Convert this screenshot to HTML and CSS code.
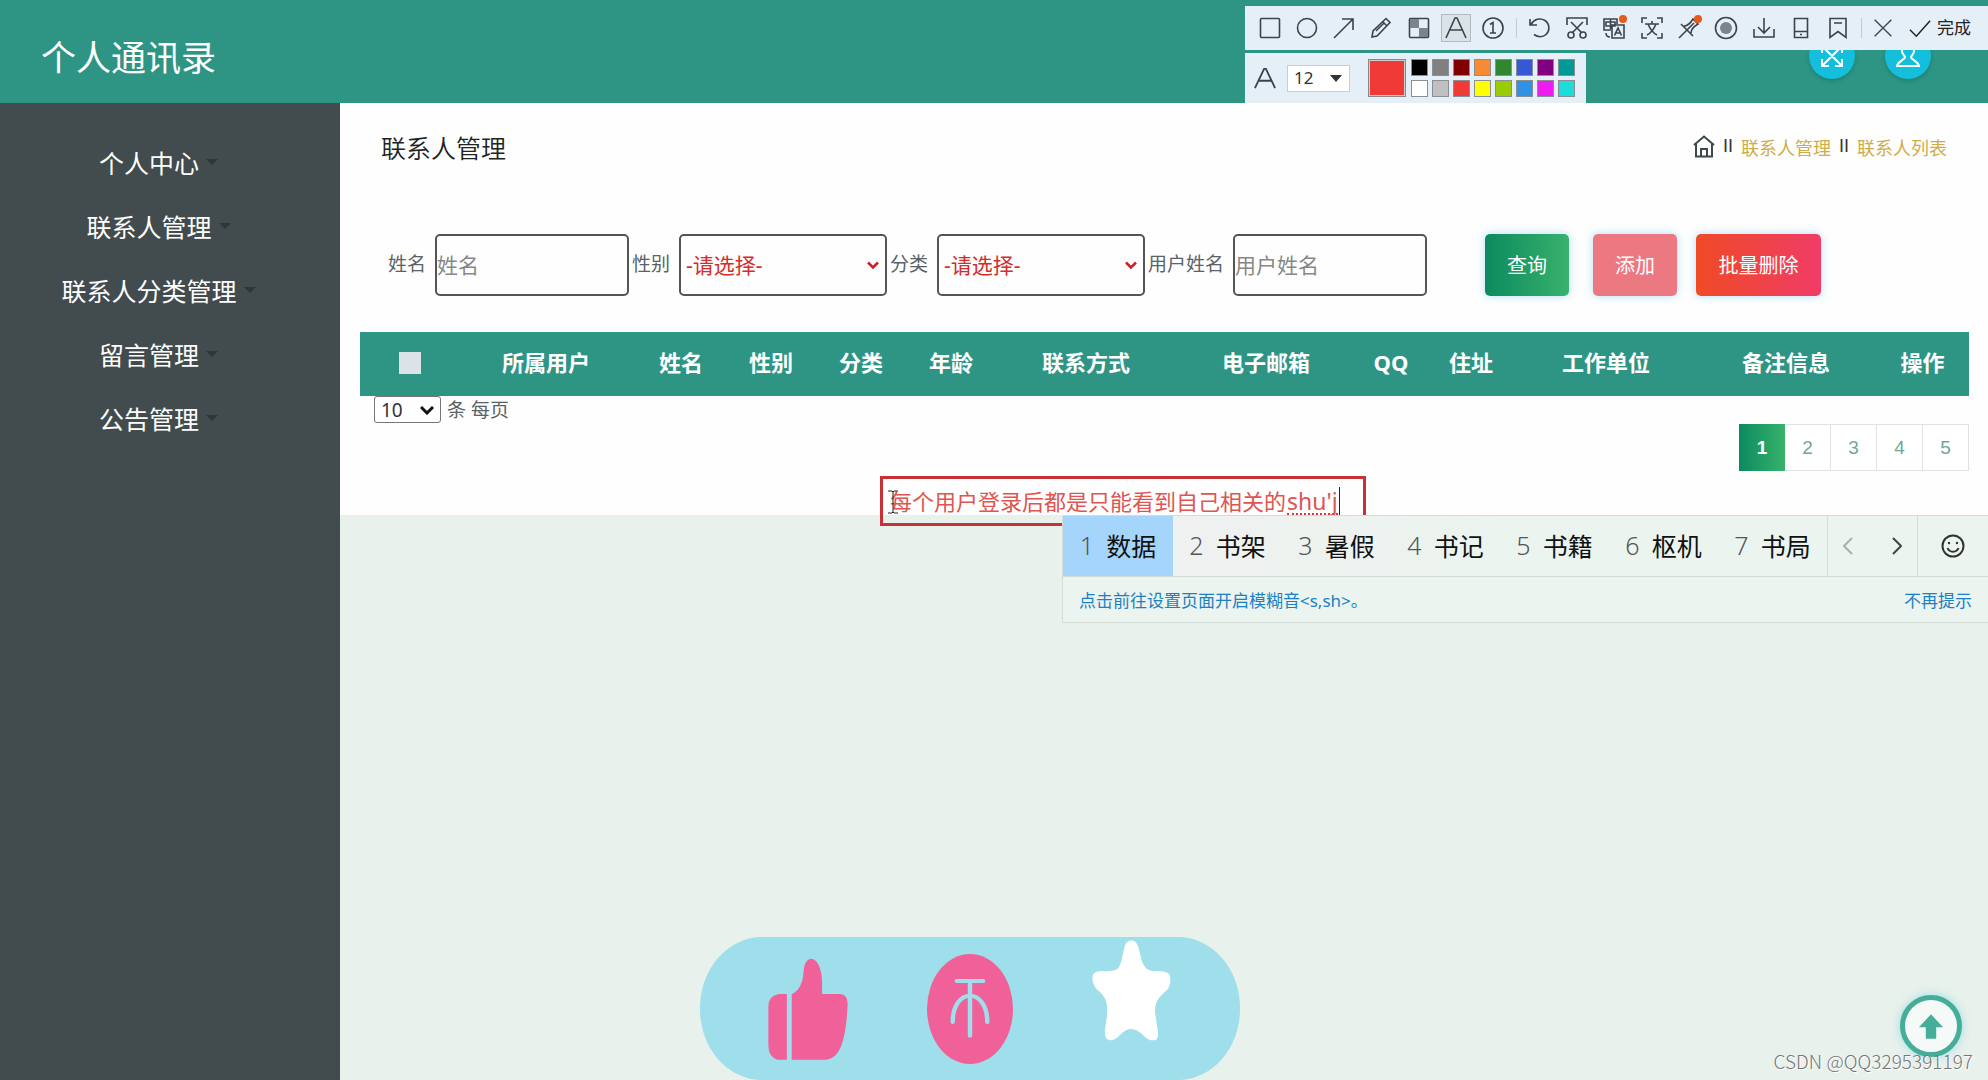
FILE: index.html
```html
<!DOCTYPE html>
<html lang="zh-CN">
<head>
<meta charset="utf-8">
<title>个人通讯录</title>
<link rel="stylesheet" href="styles.css">
</head>
<body>
<div class="page">
  <header class="header">
    <h1 class="brand">个人通讯录</h1>
    <div class="header-actions">
      <button class="round-btn" type="button" aria-label="全屏">
        <svg width="24" height="24" viewBox="0 0 24 24"><path d="M3 3l18 18M21 3L3 21M2 9V2h7M15 2h7v7M22 15v7h-7M9 22H2v-7"/></svg>
      </button>
      <button class="round-btn" type="button" aria-label="用户">
        <svg width="24" height="24" viewBox="0 0 24 24"><path d="M12 1c-4 0-6 3-6 6 0 3 2 4 3 6 0 3-7 4-8 9h22c-1-5-8-6-8-9 1-2 3-3 3-6 0-3-2-6-6-6z"/></svg>
      </button>
    </div>
  </header>

  <div class="layout">
    <nav class="sidebar">
      <a class="menu-item" href="#">个人中心<span class="caret"></span></a>
      <a class="menu-item" href="#">联系人管理<span class="caret"></span></a>
      <a class="menu-item" href="#">联系人分类管理<span class="caret"></span></a>
      <a class="menu-item" href="#">留言管理<span class="caret"></span></a>
      <a class="menu-item" href="#">公告管理<span class="caret"></span></a>
    </nav>

    <main class="main">
      <section class="panel">
        <div class="title-row">
          <h2 class="page-title">联系人管理</h2>
          <div class="breadcrumb">
            <a class="home" href="#" aria-label="首页"><svg width="22" height="23" viewBox="0 0 22 23"><path d="M1 10L11 1.500l10 8.500M3 9v12.500h16V9M8 21.500V14h6v7.500"/></svg></a>
            <span class="divider">II</span>
            <a href="#">联系人管理</a>
            <span class="divider">II</span>
            <a href="#">联系人列表</a>
          </div>
        </div>

        <form class="search">
          <label for="name">姓名</label>
          <input id="name" class="field" type="text" placeholder="姓名">
          <label for="sex">性别</label>
          <select id="sex" class="field select"><option>-请选择-</option></select>
          <label for="kind">分类</label>
          <select id="kind" class="field select"><option>-请选择-</option></select>
          <label for="user">用户姓名</label>
          <input id="user" class="field" type="text" placeholder="用户姓名">
          <div class="buttons">
            <button class="btn btn-query" type="button">查询</button>
            <button class="btn btn-add" type="button">添加</button>
            <button class="btn btn-delete" type="button">批量删除</button>
          </div>
        </form>

        <table class="contacts">
          <colgroup>
            <col class="c-check"><col class="c-wide"><col class="c-short"><col class="c-short"><col class="c-short"><col class="c-short"><col class="c-wide"><col class="c-wide"><col class="c-qq"><col class="c-short"><col class="c-wide"><col class="c-wide"><col class="c-last">
          </colgroup>
          <thead>
            <tr>
              <th><input class="check" type="checkbox" aria-label="全选"></th>
              <th>所属用户</th><th>姓名</th><th>性别</th><th>分类</th><th>年龄</th><th>联系方式</th><th>电子邮箱</th><th>QQ</th><th>住址</th><th>工作单位</th><th>备注信息</th><th>操作</th>
            </tr>
          </thead>
        </table>

        <div class="table-foot">
          <label class="per-page"><select class="size-select"><option>10</option></select>条 每页</label>
          <div class="pager">
            <button class="page-no current" type="button">1</button>
            <button class="page-no" type="button">2</button>
            <button class="page-no" type="button">3</button>
            <button class="page-no" type="button">4</button>
            <button class="page-no" type="button">5</button>
          </div>
        </div>
      </section>
    </main>
  </div>

  <div class="shot-tools">
    <div class="tool-row">
      <div class="tools tools-draw">
        <button type="button" aria-label="矩形"><svg viewBox="0 0 24 24"><rect x="2.500" y="2.500" width="19" height="19" rx="1"/></svg></button>
        <button type="button" aria-label="椭圆"><svg viewBox="0 0 24 24"><circle cx="12" cy="12" r="9.500"/></svg></button>
        <button type="button" aria-label="箭头"><svg viewBox="0 0 24 24"><path d="M2 22L21 3M10 3h11v11"/></svg></button>
        <button type="button" aria-label="画笔"><svg viewBox="0 0 24 24"><path d="M3 21l1-6L17 2.500l4 4L8 20zM14 6l4 4M7 15l8-8"/></svg></button>
        <button type="button" aria-label="马赛克"><svg viewBox="0 0 24 24"><rect x="2.500" y="2.500" width="19" height="19" rx="1"/><path class="gray" d="M3 3h9v9H3zM12 12h9v9h-9z"/></svg></button>
        <button type="button" aria-label="文字"><svg class="active" viewBox="0 0 30 28"><path d="M5 24L14 4h2l9 20M9 16h12"/></svg></button>
        <button type="button" aria-label="序号"><svg viewBox="0 0 24 24"><circle cx="12" cy="12" r="10"/><path d="M9 8.500L12 6.500V17M9 17h6"/></svg></button>
      </div>
      <span class="sep"></span>
      <div class="tools tools-edit">
        <button type="button" aria-label="撤销"><svg viewBox="0 0 24 24"><path d="M2 3v6h7M3 8.500C6 3 12 1.500 17 4.500c5 3.500 5 10.500 1 14-3 3-8 3-12 0"/></svg></button>
        <button type="button" aria-label="裁剪"><svg viewBox="0 0 24 24"><path d="M2 9V2h20v7M6 6l11 11M18 6L7 17"/><circle cx="6" cy="19" r="3"/><circle cx="18" cy="19" r="3"/></svg></button>
        <button type="button" aria-label="翻译"><svg viewBox="0 0 24 24"><path d="M15 8V3H2v11h7M4 6h9v4H4zM8.500 3v10M10 9h12v13H10zM12.500 19.500L16 12l3.500 7.500M14 17h4M4 17c0 3 1 4 4 4"/><circle class="dot" cx="21" cy="3" r="4"/></svg></button>
        <button type="button" aria-label="识别"><svg viewBox="0 0 24 24"><path d="M2 7V2h5M17 2h5v5M22 17v5h-5M7 22H2v-5M5 8h14M12 5v3M7 19c4-2 7-6 9-11M8 8c2 5 5 9 9 11"/></svg></button>
        <button type="button" aria-label="钉住"><svg viewBox="0 0 24 24"><path d="M2 22l8-8M4 8l12 12M7 10c3 0 6-2 9-7l5 5c-5 3-7 6-7 9M10 14l7-7"/><circle class="dot" cx="21" cy="3" r="4"/></svg></button>
        <button type="button" aria-label="录制"><svg viewBox="0 0 24 24"><circle cx="12" cy="12" r="10.500"/><circle class="gray" cx="12" cy="12" r="6"/></svg></button>
        <button type="button" aria-label="保存"><svg viewBox="0 0 24 24"><path d="M12 2v15M6 11l6 6 6-6M2 13v8h20v-8"/></svg></button>
        <button type="button" aria-label="手机"><svg viewBox="0 0 24 24"><path d="M5.500 2.500h13v19h-13zM5.500 15.500h13M11 18.500h2"/></svg></button>
        <button type="button" aria-label="收藏"><svg viewBox="0 0 24 24"><path d="M4 2.500h16v19l-8-6-8 6zM8 7h8"/></svg></button>
      </div>
      <span class="sep"></span>
      <button class="tool-close" type="button" aria-label="关闭"><svg viewBox="0 0 24 24"><path d="M2 2l20 20M22 2L2 22"/></svg></button>
      <button class="tool-done" type="button"><svg viewBox="0 0 24 24"><path d="M1 14l7 7L23 4"/></svg>完成</button>
    </div>
    <div class="style-row">
      <svg class="style-a" viewBox="0 0 24 24"><path d="M1 23L11 2h2l10 21M5 15h14"/></svg>
      <select class="font-size" aria-label="字号"><option>12</option></select>
      <span class="swatch-now"></span>
      <div class="swatches">
        <button class="sw black" type="button" aria-label="黑"></button><button class="sw gray-d" type="button" aria-label="灰"></button><button class="sw maroon" type="button" aria-label="深红"></button><button class="sw orange" type="button" aria-label="橙"></button><button class="sw green" type="button" aria-label="绿"></button><button class="sw blue" type="button" aria-label="蓝"></button><button class="sw purple" type="button" aria-label="紫"></button><button class="sw teal" type="button" aria-label="青"></button>
        <button class="sw white" type="button" aria-label="白"></button><button class="sw silver" type="button" aria-label="银"></button><button class="sw red" type="button" aria-label="红"></button><button class="sw yellow" type="button" aria-label="黄"></button><button class="sw lime" type="button" aria-label="黄绿"></button><button class="sw sky" type="button" aria-label="天蓝"></button><button class="sw magenta" type="button" aria-label="品红"></button><button class="sw cyan" type="button" aria-label="蓝绿"></button>
      </div>
    </div>
  </div>

  <div class="note">
    <svg class="ibeam" width="10" height="24" viewBox="0 0 10 24"><path d="M0 1h4l1 1 1-1h4M5 2v20M0 23h4l1-1 1 1h4"/></svg>
    <span>每个用户登录后都是只能看到自己相关的</span><span class="composing">shu'j</span><span class="cursor"></span>
  </div>

  <div class="ime">
    <div class="ime-row">
      <button class="cand selected" type="button"><span class="num">1</span>数据</button>
      <button class="cand" type="button"><span class="num">2</span>书架</button>
      <button class="cand" type="button"><span class="num">3</span>暑假</button>
      <button class="cand" type="button"><span class="num">4</span>书记</button>
      <button class="cand" type="button"><span class="num">5</span>书籍</button>
      <button class="cand" type="button"><span class="num">6</span>枢机</button>
      <button class="cand" type="button"><span class="num">7</span>书局</button>
      <div class="ime-nav">
        <button class="prev" type="button" aria-label="上一页"><svg width="10" height="18" viewBox="0 0 10 18"><path d="M9 1L1 9l8 8"/></svg></button>
        <button type="button" aria-label="下一页"><svg width="10" height="18" viewBox="0 0 10 18"><path d="M1 1l8 8-8 8"/></svg></button>
      </div>
      <button class="ime-face" type="button" aria-label="表情"><svg width="24" height="24" viewBox="0 0 24 24"><circle cx="12" cy="12" r="10.500"/><path d="M6.500 14c2 5 9 5 11 0"/><circle class="eye" cx="8" cy="9" r="1.200"/><circle class="eye" cx="16" cy="9" r="1.200"/></svg></button>
    </div>
    <div class="ime-tip">
      <a href="#">点击前往设置页面开启模糊音&lt;s,sh&gt;。</a>
      <a href="#">不再提示</a>
    </div>
  </div>

  <div class="triple">
    <button type="button" aria-label="点赞"><svg width="80" height="102" viewBox="237 111 216 306" preserveAspectRatio="none">
      <path class="pink" d="M288 219h-22q-28 5-28 38v116q0 36 25 43h25zM301 416V219q29-14 32-66 2-37 19-40c20 0 31 34 31 71v35h49q20 2 20 28-2 72-14 117-13 48-43 52z"/></svg></button>
    <button type="button" aria-label="投币"><svg width="86" height="110" viewBox="667 101 234 330" preserveAspectRatio="none">
      <ellipse class="pink" cx="784" cy="266" rx="117" ry="165"/><path class="coin" d="M748 182h72M784 186v160M737 305c0-105 94-105 94 0"/></svg></button>
    <button class="fav" type="button" aria-label="收藏"><svg width="79" height="101" viewBox="1116 59 214 303" preserveAspectRatio="none">
      <path class="star" d="M1222 60q13 0 19 18l9 40q6 22 18 30 7 4 20 4 42-3 40 22 2 30-16 42c-22 22-26 38-25 62l7 50q4 32-11 32-14 1-27-14-33-38-62-4-16 19-29 18-16-2-14-30l6-48c2-28-3-50-19-66q-21-18-21-42-1-22 24-22 36 2 43-6 8-8 12-26l8-40q4-18 18-20z"/></svg></button>
  </div>

  <button class="to-top" type="button" aria-label="返回顶部"><svg width="26" height="27" viewBox="0 0 30 30"><path d="M15 1L29 16h-8v13H9V16H1z"/></svg></button>
  <div class="watermark">CSDN @QQ3295391197</div>
</div>
</body>
</html>
```

FILE: styles.css
```css
* { box-sizing: border-box; }

body {
  margin: 0;
  background: #e8f1ec;
  font-family: "Noto Sans", "Noto Sans CJK SC", sans-serif;
  color: #333;
}

button, input, select { font-family: inherit; }
button { margin: 0; padding: 0; border: 0; background: none; color: inherit; cursor: pointer; }
a { color: inherit; text-decoration: none; }
svg { display: block; fill: none; stroke: currentColor; }

.page {
  position: relative;
  min-height: 100vh;
  display: flex;
  flex-direction: column;
  overflow: hidden;
}

/* Header */
.header {
  display: flex;
  align-items: center;
  justify-content: space-between;
  height: 103px;
  padding: 8px 57px 0 41px;
  background: #2e9585;
}
.brand { margin: 0; padding-top: 4px; font-size: 35px; font-weight: 400; line-height: 50px; color: #fff; }
.header-actions { display: flex; gap: 30px; }
.round-btn {
  display: grid;
  place-items: center;
  width: 46px;
  height: 46px;
  border-radius: 50%;
  background: #14bfdc;
  color: #fff;
  box-shadow: 0 2px 4px rgba(0, 60, 60, .25);
}
.round-btn svg { stroke-width: 2; }

/* Sidebar */
.layout { flex: 1; display: flex; }
.sidebar {
  flex: 0 0 340px;
  padding: 27px 23px 0 0;
  background: #424b4d;
}
.menu-item {
  display: flex;
  align-items: center;
  justify-content: center;
  gap: 7px;
  height: 64px;
  font-size: 25px;
  color: #fff;
}
.caret { border: 6px solid transparent; border-top-color: #2d3638; border-bottom: 0; }

/* Content panel */
.main { flex: 1; min-width: 0; }
.panel { padding: 30px 19px 44px 20px; background: #fdfefd; }
.title-row {
  display: flex;
  align-items: center;
  justify-content: space-between;
  height: 30px;
  padding: 0 22px 0 21px;
}
.page-title { margin: 0; font-size: 25px; font-weight: 350; line-height: 30px; color: #222; }
.breadcrumb { display: flex; align-items: center; gap: 8px; padding-bottom: 3px; font-size: 18px; color: #333; }
.breadcrumb a { color: #cfac4a; }
.breadcrumb .home { color: #3f484b; }
.breadcrumb svg { stroke-width: 2; }
.divider { font-family: "Liberation Sans", sans-serif; }

.search {
  display: flex;
  align-items: center;
  margin-top: 71px;
  padding-left: 28px;
  font-size: 19px;
  color: #5a6267;
}
.search label { margin: 0 9px 4px 3px; white-space: nowrap; }
.search label:first-child { margin-left: 0; }
.field {
  width: 194px;
  height: 62px;
  padding: 0;
  border: 2px solid #555;
  border-radius: 5px;
  background-color: transparent;
  font-size: 21px;
}
.field::placeholder { color: #888; }
.select {
  width: 208px;
  padding: 0 5px;
  appearance: none;
  color: #d52b2b;
  background: url("data:image/svg+xml,%3Csvg xmlns='http://www.w3.org/2000/svg' width='12' height='9'%3E%3Cpath d='M1 1.500l5 5 5-5' fill='none' stroke='%23d01f1f' stroke-width='2.500'/%3E%3C/svg%3E") no-repeat right 6px center;
}
.buttons { display: flex; margin-left: 58px; }
.btn {
  width: 84px;
  height: 62px;
  padding-bottom: 2px;
  border-radius: 5px;
  font-size: 20px;
  color: #fff;
  box-shadow: 0 0 9px rgba(70, 170, 240, .4);
}
.btn-query { background: linear-gradient(90deg, #0b8a5f, #39b26c); }
.btn-add { margin-left: 24px; background: #ec7882; }
.btn-delete { width: 125px; margin-left: 19px; background: linear-gradient(90deg, #f04a26, #f03c68); }

/* Table */
.contacts {
  width: 100%;
  margin-top: 36px;
  table-layout: fixed;
  border-collapse: collapse;
  background: #2e9585;
  color: #fff;
}
.contacts th { height: 64px; padding: 0 0 4px; font-size: 22px; font-weight: 700; line-height: 30px; }
.c-check { width: 96px; }
.c-wide { width: 180px; }
.c-short { width: 90px; }
.c-qq { width: 70px; }
.c-last { width: 93px; }
.check {
  display: block;
  width: 22px;
  height: 22px;
  margin: 2px 0 0 39px;
  appearance: none;
  background: #dbe2e8;
}

.table-foot { display: flex; justify-content: space-between; align-items: flex-start; padding-left: 14px; }
.per-page { display: flex; align-items: center; gap: 6px; font-size: 19px; line-height: 26px; color: #5a6267; }
.size-select {
  width: 67px;
  height: 27px;
  padding: 0 6px;
  border: 1px solid #767676;
  border-radius: 3px;
  appearance: none;
  font-size: 19px;
  line-height: 24px;
  color: #333;
  background: #fff url("data:image/svg+xml,%3Csvg xmlns='http://www.w3.org/2000/svg' width='14' height='10'%3E%3Cpath d='M1 2l6 6 6-6' fill='none' stroke='%23111' stroke-width='3'/%3E%3C/svg%3E") no-repeat right 6px center;
}
.pager { display: flex; margin-top: 28px; }
.page-no {
  width: 46px;
  height: 47px;
  border: 1px solid #dfe4e3;
  border-left: 0;
  background: #fff;
  font-family: "Liberation Sans", sans-serif;
  font-size: 19px;
  color: #6fa892;
}
.page-no.current { border: 0; background: linear-gradient(90deg, #0b8a5f, #39b26c); color: #fff; font-weight: 700; }

/* Screenshot toolbar */
.shot-tools { position: absolute; top: 6px; right: 0; width: 743px; color: #3d434b; }
.tool-row { display: flex; align-items: center; height: 44px; padding-left: 6px; background: #e5eff8; }
.tools { display: flex; }
.tools button { flex: 1; display: grid; place-items: center; }
.tools-draw { width: 261px; }
.tools-edit { width: 336px; }
.tool-row svg { width: 24px; height: 24px; stroke-width: 1.6; overflow: visible; }
.tool-row svg.active { width: 30px; height: 28px; background: #dae3e8; outline: 1px solid #b4bcc1; outline-offset: -1px; }
.tool-row .gray { fill: #7c838c; stroke: none; }
.tool-row .dot { fill: #e8591c; stroke: none; }
.sep { width: 1px; height: 20px; margin: 0 4px; background: #c2cbd2; }
.tool-close { width: 34px; display: grid; place-items: center; }
.tool-row .tool-close svg { width: 20px; height: 20px; }
.tool-done { display: flex; align-items: center; gap: 6px; margin-left: 9px; font-size: 17px; line-height: 24px; color: #222; }
.tool-row .tool-done svg { width: 22px; height: 22px; }

.style-row {
  display: flex;
  align-items: center;
  width: 341px;
  height: 50px;
  margin-top: 3px;
  padding-left: 9px;
  background: #e5eff8;
}
.style-a { width: 22px; height: 22px; stroke-width: 2; }
.font-size {
  width: 63px;
  height: 27px;
  margin: 0 18px 0 11px;
  padding: 0 6px;
  border: 1px solid #c8ced2;
  appearance: none;
  font-size: 17px;
  line-height: 22px;
  color: #333;
  background: #fff url("data:image/svg+xml,%3Csvg xmlns='http://www.w3.org/2000/svg' width='12' height='7'%3E%3Cpath d='M0 0h12L6 7z' fill='%23333'/%3E%3C/svg%3E") no-repeat right 7px center;
}
.swatch-now { width: 38px; height: 38px; border: 1px solid #888; background: #ef3a38; box-shadow: inset 0 0 0 1px #ccc; }
.swatches { display: grid; grid-template-columns: repeat(8, 17px); gap: 4px; margin-left: 5px; }
.sw { height: 17px; border: 1px solid #8b8f92; }
.black { background: #000; } .gray-d { background: #808080; } .maroon { background: #800000; } .orange { background: #f78a34; }
.green { background: #30872f; } .blue { background: #3757d6; } .purple { background: #800080; } .teal { background: #009a96; }
.white { background: #fff; } .silver { background: #c0c0c0; } .red { background: #ef3a38; } .yellow { background: #ff0; }
.lime { background: #99cc05; } .sky { background: #3192e5; } .magenta { background: #ee1cee; } .cyan { background: #1cdcdc; }

/* Annotation on the canvas */
.note {
  position: absolute;
  left: 880px;
  top: 476px;
  display: flex;
  align-items: center;
  width: 486px;
  height: 50px;
  padding-left: 7px;
  border: 3px solid #c63337;
  font-size: 22px;
  line-height: 30px;
  white-space: nowrap;
  color: #df5552;
}
.ibeam { position: absolute; left: 5px; top: 11px; color: #222; }
.composing { height: 28px; margin-left: 1px; border-bottom: 2px dotted #d93a3a; font-size: 23px; line-height: 28px; }
.cursor { width: 1px; height: 29px; margin-left: 1px; background: #222; }

/* Input method window */
.ime {
  position: absolute;
  left: 1062px;
  right: 0;
  top: 515px;
  border: 1px solid #d3dcd7;
  border-right: 0;
  background: #ebf4ef;
}
.ime-row { display: flex; height: 61px; background: linear-gradient(90deg, #f0f0ef, #ebf4ef 50%); border-bottom: 1px solid #d3dcd7; }
.cand { flex: 0 1 109px; display: flex; align-items: center; justify-content: center; gap: 12px; padding-bottom: 2px; font-size: 25px; color: #111; }
.cand .num { font-weight: 300; color: #555; }
.cand.selected { flex-basis: 110px; background: #a6d5fb; }
.ime-nav { display: flex; justify-content: space-between; align-items: center; width: 91px; padding: 0 15px; border: solid #d3dcd7; border-width: 0 1px; color: #444; }
.ime-nav .prev { color: #aab2ae; }
.ime-nav svg { stroke-width: 2; }
.ime-face { flex: 1; display: grid; place-items: center; color: #333; }
.ime-face svg { stroke-width: 2; }
.ime-face .eye { fill: currentColor; stroke: none; }
.ime-tip { display: flex; align-items: center; justify-content: space-between; height: 45px; padding: 0 16px; font-size: 17px; color: #1c81c4; }

/* Like, coin and favourite bar */
.triple {
  position: absolute;
  left: 700px;
  bottom: 0;
  display: flex;
  align-items: center;
  gap: 79px;
  width: 540px;
  height: 143px;
  padding-left: 68px;
  border-radius: 62px / 71px;
  background: #9fdeeb;
}
.triple svg { stroke: none; }
.triple .pink { fill: #f0619a; }
.triple .star { fill: #fff; }
.triple .coin { stroke: #9fdeeb; stroke-width: 12; stroke-linecap: round; }
.fav { align-self: flex-start; padding-top: 3px; }

.to-top {
  position: absolute;
  right: 26px;
  bottom: 23px;
  display: grid;
  place-items: center;
  width: 62px;
  height: 62px;
  border: 5px solid #44ae98;
  border-radius: 50%;
  background: #f5faf8;
  box-shadow: 0 0 10px rgba(60, 200, 220, .45);
}
.to-top svg { fill: #44ae98; stroke: none; }
.watermark {
  position: absolute;
  right: 15px;
  bottom: 7px;
  font-family: "Noto Sans CJK SC", sans-serif;
  font-size: 19px;
  font-weight: 300;
  line-height: 24px;
  color: #777;
  text-shadow: 1px 1px 0 #fff;
}
```
